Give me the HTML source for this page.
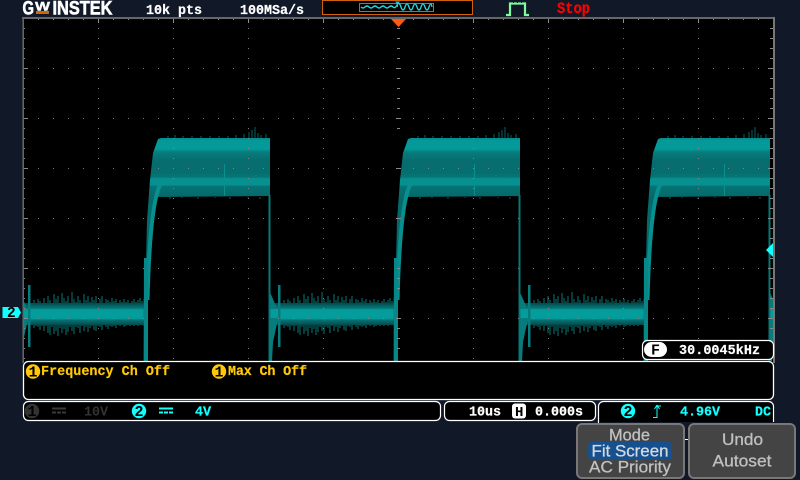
<!DOCTYPE html>
<html><head><meta charset="utf-8"><style>
html,body{margin:0;padding:0;background:#111929;width:800px;height:480px;overflow:hidden}
svg{display:block}
.m{font-family:"Liberation Mono",monospace;font-size:13.4px;font-weight:bold;stroke-width:.2}
.s{font-family:"Liberation Sans",sans-serif}
</style></head><body>
<svg width="800" height="480" viewBox="0 0 800 480" xmlns="http://www.w3.org/2000/svg">
<defs>
<linearGradient id="pl" gradientUnits="userSpaceOnUse" x1="0" y1="137" x2="0" y2="197">
<stop offset="0" stop-color="#067f80"/><stop offset=".05" stop-color="#059898"/><stop offset=".2" stop-color="#059a9a"/><stop offset=".25" stop-color="#077d7e"/><stop offset=".4" stop-color="#076c6d"/><stop offset=".6" stop-color="#066e6f"/><stop offset=".67" stop-color="#067677"/><stop offset=".69" stop-color="#088f90"/><stop offset=".8" stop-color="#088f90"/><stop offset=".82" stop-color="#067475"/><stop offset="1" stop-color="#056869"/>
</linearGradient>
<linearGradient id="lw" gradientUnits="userSpaceOnUse" x1="0" y1="303" x2="0" y2="325">
<stop offset="0" stop-color="#054a4b"/><stop offset=".25" stop-color="#067a7b"/><stop offset=".3" stop-color="#059c9c"/><stop offset=".7" stop-color="#059c9c"/><stop offset=".78" stop-color="#067172"/><stop offset="1" stop-color="#054a4b"/>
</linearGradient>
<pattern id="hd" patternUnits="userSpaceOnUse" x="23" y="18" width="15" height="50"><rect x="0" y="0" width="1" height="1" fill="#8a8a8a"/></pattern>
<pattern id="vd" patternUnits="userSpaceOnUse" x="23" y="18" width="75" height="10"><rect x="0" y="0" width="1" height="1" fill="#8a8a8a"/></pattern>
<pattern id="tt" patternUnits="userSpaceOnUse" x="23" y="18" width="15" height="10"><rect x="0" y="0" width="1" height="2" fill="#8a8a8a"/></pattern>
<pattern id="lt" patternUnits="userSpaceOnUse" x="23" y="18" width="10" height="10"><rect x="0" y="0" width="2" height="1" fill="#8a8a8a"/></pattern>
<clipPath id="sc"><rect x="24" y="19" width="749" height="342"/></clipPath>
<g id="p">
<path d="M12 303V325M14 300V328M16 303V326M18 299V327M20 301V330M22 304V326M24 298V331M26 303V326M28 296V333M30 300V335M32 304V327M34 294V334M36 299V331M38 296V336M40 303V328M42 293V333M44 298V329M46 301V335M48 296V332M50 303V327M52 292V331M54 299V334M56 302V327M58 296V328M60 300V333M62 303V326M64 294V331M66 300V327M68 296V332M70 302V328M72 297V326M74 300V330M76 296V331M78 303V326M80 299V327M82 296V330M84 303V325M86 299V327M88 300V329M90 302V326M92 298V327M94 301V326M96 299V328M98 303V325M100 300V326M102 302V325M104 299V327M106 302V326M108 300V325M110 303V326M112 301V325M114 299V326M116 302V325M118 300V326M120 298V325M122 301V325M124 299V326" stroke="#076465" stroke-width="1.200" fill="none"/>
<rect x="5" y="303" width="120" height="22" fill="url(#lw)"/>
<path d="M-1 290L6 306L8 320L6 328L3 342L2 361L-1 361Z" fill="#077c7d"/>
<rect x="0" y="309" width="8" height="9" fill="#059c9c"/>
<rect x="8" y="285" width="2.500" height="62" fill="#077c7d"/>
<rect x="-1.500" y="195" width="2" height="166" fill="#077879"/>
<path d="M123.500 362L124 258L126 262L127 220L130 180L133 153L138 139L141 138L250 138L250 196L137 197L134 203L131 215L129 245L128 300L127.500 362Z" fill="url(#pl)"/>
<path d="M127.500 300Q130 205 140 185L148 181" stroke="#088f90" stroke-width="4" fill="none"/>
<rect x="124" y="258" width="4" height="103" fill="#088788"/>
<path d="M148 136V138M155 135V138M163 136V138M172 136V138M181 136V138M190 136V138M199 136V138M208 136V138M216 135V138M224 134V138M229 132V138M232 130V138M235 127V138M238 133V138M241 135V138M246 134V138M150 197V199M162 197V198M178 197V199M195 197V198M210 197V199M228 197V198M240 197V199" stroke="#065f60" stroke-width="1" fill="none"/>
<rect x="204" y="164" width="1" height="32" fill="#088f90"/>
</g>
</defs>

<!-- logo -->
<text class="s" x="22.500" y="14.500" font-size="19" font-weight="bold" fill="#fff" stroke="#fff" stroke-width=".6" textLength="11.500" lengthAdjust="spacingAndGlyphs">G</text>
<text class="s" x="35" y="10.500" font-size="12" font-weight="bold" fill="#fff" stroke="#fff" stroke-width=".4" textLength="15" lengthAdjust="spacingAndGlyphs">W</text>
<rect x="36" y="11" width="13" height="3" fill="#d0660c"/>
<text class="s" x="52.500" y="14.500" font-size="19" font-weight="bold" fill="#fff" stroke="#fff" stroke-width=".6" textLength="60" lengthAdjust="spacingAndGlyphs">INSTEK</text>

<text class="m" x="146" y="14" fill="#fff" stroke="#fff" textLength="56">10k pts</text>
<text class="m" x="240" y="14" fill="#fff" stroke="#fff" textLength="64">100MSa/s</text>
<text class="m" x="557" y="13" fill="#f00" stroke="#f00" style="font-size:15.500px" textLength="33" lengthAdjust="spacingAndGlyphs">Stop</text>

<!-- memory bar -->
<rect x="322.500" y="0.500" width="150" height="14" fill="#000" stroke="#d0620f"/>
<rect x="359.500" y="3.500" width="74" height="8" fill="#000" stroke="#777"/>
<path d="M361 7Q363 9 365 7T369 7T373 7T377 7T381 7T385 7T389 7T393 7T397 5T401 7T405 7T409 7T413 7T417 7T421 7T425 7T429 7T432 7" stroke="#22dde5" stroke-width="1.300" fill="none"/>
<path d="M395 1.500H400L397.500 4.500Z" fill="#1ce"/>
<rect x="397" y="3" width="1" height="4" fill="#1ce"/>

<!-- trigger status -->
<path d="M506 15H510V3.500H525V15H529" stroke="#7dfb9f" stroke-width="2.200" fill="none"/>
<path d="M513.500 2V3M517.500 2V3M521.500 2V3" stroke="#111929" stroke-width="1"/>

<!-- scope -->
<rect x="24" y="19" width="749" height="345" fill="#000"/>
<g clip-path="url(#sc)">
<use href="#p" x="20"/><use href="#p" x="270"/><use href="#p" x="520"/><use href="#p" x="770"/>
</g>
<g opacity=".9">
<rect x="23" y="68" width="750" height="1" fill="url(#hd)"/>
<rect x="23" y="118" width="750" height="1" fill="url(#hd)"/>
<rect x="23" y="168" width="750" height="1" fill="url(#hd)"/>
<rect x="23" y="218" width="750" height="1" fill="url(#hd)"/>
<rect x="23" y="268" width="750" height="1" fill="url(#hd)"/>
<rect x="23" y="318" width="750" height="1" fill="url(#hd)"/>
<rect x="98" y="28" width="1" height="333" fill="url(#vd)"/>
<rect x="173" y="28" width="1" height="333" fill="url(#vd)"/>
<rect x="248" y="28" width="1" height="333" fill="url(#vd)"/>
<rect x="323" y="28" width="1" height="333" fill="url(#vd)"/>
<rect x="473" y="28" width="1" height="333" fill="url(#vd)"/>
<rect x="548" y="28" width="1" height="333" fill="url(#vd)"/>
<rect x="623" y="28" width="1" height="333" fill="url(#vd)"/>
<rect x="698" y="28" width="1" height="333" fill="url(#vd)"/>
</g>
<path d="M397 28.500H400M397 38.500H400M397 48.500H400M397 58.500H400M396 68.500H401M397 78.500H400M397 88.500H400M397 98.500H400M397 108.500H400M396 118.500H401M397 128.500H400M396 168.500H401M396 218.500H401M397 268.500H400M397 278.500H400M397 288.500H400M396 318.500H401M397 328.500H400M397 338.500H400M397 348.500H400" stroke="#8a8a8a"/>
<path d="M770 28.500H773M770 38.500H773M770 48.500H773M770 58.500H773M768 68.500H773M770 78.500H773M770 88.500H773M770 98.500H773M770 108.500H773M768 118.500H773M770 128.500H773M770 138.500H773M770 148.500H773M770 158.500H773M768 168.500H773M770 178.500H773M770 188.500H773M770 198.500H773M770 208.500H773M768 218.500H773M770 228.500H773M770 238.500H773M770 248.500H773M770 258.500H773M768 268.500H773M770 278.500H773M770 288.500H773M770 298.500H773M770 308.500H773M768 318.500H773M770 328.500H773" stroke="#8a8a8a"/>
<rect x="23" y="19" width="750" height="2" fill="url(#tt)"/>
<rect x="24" y="18" width="3" height="345" fill="url(#lt)"/>
<path d="M98.500 19V23M173.500 19V23M248.500 19V23M323.500 19V23M473.500 19V23M548.500 19V23M623.500 19V23M698.500 19V23M24 68.500H28M24 118.500H28M24 168.500H28M24 218.500H28M24 268.500H28M24 318.500H28" stroke="#8a8a8a"/>
<rect x="22" y="17" width="753" height="2" fill="#666"/>
<rect x="22.500" y="17" width="1.500" height="346" fill="#666"/>
<rect x="773" y="17" width="2" height="346" fill="#777"/>

<path d="M391 19H406L398.500 27Z" fill="#ff5a14"/>

<!-- markers -->
<path d="M2.500 307H18L21 312.500L18 318H2.500Z" fill="#1ff"/>
<text class="m" x="7" y="317" fill="#000" style="font-size:14.500px">2</text>
<path d="M766 250L773 243V257Z" fill="#1ff"/>

<!-- freq box -->
<rect x="642.500" y="340.500" width="131" height="19" rx="5" fill="#000" stroke="#fff" stroke-width="1.200"/>
<rect x="644" y="342" width="23" height="15" rx="7.500" fill="#fff"/>
<text class="m" x="651" y="354.500" fill="#000" style="font-size:15px">F</text>
<text class="m" x="679" y="354" fill="#fff" stroke="#fff" textLength="81">30.0045kHz</text>

<!-- info box -->
<rect x="23.500" y="361.500" width="750" height="38" rx="5" fill="#000" stroke="#fff" stroke-width="1.300"/>
<circle cx="33" cy="371.500" r="7.200" fill="#ffc80a"/>
<text class="m" x="28.500" y="376.500" fill="#000" style="font-size:15px">1</text>
<text class="m" x="41" y="375" fill="#ffc80a" stroke="#ffc80a" textLength="129">Frequency Ch Off</text>
<circle cx="219" cy="371.500" r="7.200" fill="#ffc80a"/>
<text class="m" x="214.500" y="376.500" fill="#000" style="font-size:15px">1</text>
<text class="m" x="228" y="375" fill="#ffc80a" stroke="#ffc80a" textLength="79">Max Ch Off</text>

<!-- bottom row -->
<rect x="23.500" y="401.500" width="417" height="19" rx="5" fill="#000" stroke="#fff" stroke-width="1.200"/>
<circle cx="32" cy="411" r="7.200" fill="#333"/>
<text class="m" x="27.500" y="416" fill="#000" style="font-size:15px">1</text>
<path d="M52 408.500H66" stroke="#3a3a3a" stroke-width="2"/><path d="M52 412.500H56M57 412.500H61M62 412.500H66" stroke="#3a3a3a" stroke-width="2"/>
<text class="m" x="84" y="415.500" fill="#333" textLength="24">10V</text>
<circle cx="139" cy="411" r="7.200" fill="#1ff"/>
<text class="m" x="134.500" y="416" fill="#000" style="font-size:15px">2</text>
<path d="M159 408.500H173" stroke="#1ff" stroke-width="2"/><path d="M159 412.500H163M164 412.500H168M169 412.500H173" stroke="#1ff" stroke-width="2"/>
<text class="m" x="195" y="415.500" fill="#1ff" stroke="#1ff" textLength="16">4V</text>

<rect x="444.500" y="401.500" width="151" height="19" rx="5" fill="#000" stroke="#fff" stroke-width="1.200"/>
<text class="m" x="469" y="415.500" fill="#fff" stroke="#fff" textLength="32">10us</text>
<rect x="512" y="403.500" width="14" height="15" rx="3" fill="#fff"/>
<text class="m" x="515" y="416" fill="#000" style="font-size:14px">H</text>
<text class="m" x="535" y="415.500" fill="#fff" stroke="#fff" textLength="48">0.000s</text>

<rect x="598.500" y="401.500" width="175" height="44" rx="5" fill="#000" stroke="#fff" stroke-width="1.200"/>
<circle cx="628" cy="411" r="7.200" fill="#1ff"/>
<text class="m" x="623.500" y="416" fill="#000" style="font-size:15px">2</text>
<path d="M653 417.500H657V406H661M657 405L654.500 409M657 405L659.500 409" stroke="#1ff" fill="none"/>
<text class="m" x="680" y="415.500" fill="#1ff" stroke="#1ff" textLength="40">4.96V</text>
<text class="m" x="755" y="415.500" fill="#1ff" stroke="#1ff" textLength="16">DC</text>

<rect x="600" y="422" width="200" height="58" fill="#111929"/>
<rect x="685" y="439" width="3" height="1" fill="#fff"/>

<!-- buttons -->
<rect x="577" y="424" width="107" height="54" rx="5" fill="#444" stroke="#787878" stroke-width="2"/>
<rect x="689" y="424" width="106" height="54" rx="5" fill="#444" stroke="#787878" stroke-width="2"/>
<text class="s" x="609" y="440.700" font-size="17" fill="#c0c0c0" stroke="#c0c0c0" stroke-width=".3" textLength="41" lengthAdjust="spacingAndGlyphs">Mode</text>
<rect x="588" y="442" width="84" height="18" rx="4" fill="#16508f"/>
<text class="s" x="591.500" y="456.700" font-size="17" fill="#d4d9e0" stroke="#d4d9e0" stroke-width=".3" textLength="77" lengthAdjust="spacingAndGlyphs">Fit Screen</text>
<text class="s" x="589" y="472.700" font-size="17" fill="#c0c0c0" stroke="#c0c0c0" stroke-width=".3" textLength="82" lengthAdjust="spacingAndGlyphs">AC Priority</text>
<text class="s" x="722" y="445" font-size="17" fill="#c0c0c0" stroke="#c0c0c0" stroke-width=".3" textLength="41" lengthAdjust="spacingAndGlyphs">Undo</text>
<text class="s" x="712.500" y="466.700" font-size="17" fill="#c0c0c0" stroke="#c0c0c0" stroke-width=".3" textLength="59" lengthAdjust="spacingAndGlyphs">Autoset</text>
</svg>
</body></html>
